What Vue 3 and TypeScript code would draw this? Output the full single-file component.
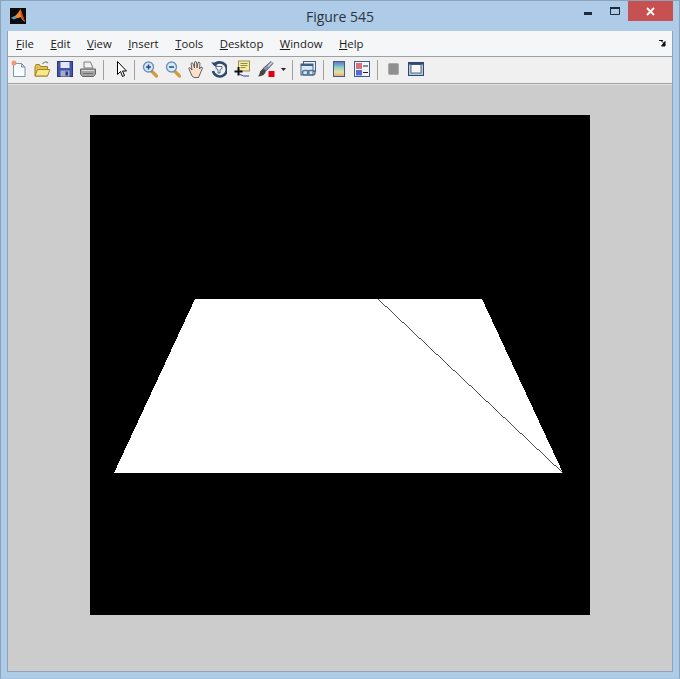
<script setup lang="ts">
const menus = [
  { key: 'F', rest: 'ile' },
  { key: 'E', rest: 'dit' },
  { key: 'V', rest: 'iew' },
  { key: 'I', rest: 'nsert' },
  { key: 'T', rest: 'ools' },
  { key: 'D', rest: 'esktop' },
  { key: 'W', rest: 'indow' },
  { key: 'H', rest: 'elp' },
];
</script>

<template>
  <div class="window">
    <header class="titlebar">
      <div class="title-left">
        <svg class="logo" width="16" height="16" viewBox="0 0 16 16">
          <rect width="16" height="16" fill="#0b0b0b" />
          <path d="M1 10l4-2 3-3 2.500-4 4.500 13-2.500-2-2-3-2 1z" fill="#f0892a" />
          <path d="M10.500 1l4.500 13-3-3-1.500-5z" fill="#c9441a" />
          <path d="M1 10l4-2 2 2-3 1.500z" fill="#4fa3c0" />
        </svg>
      </div>
      <div class="title">Figure 545</div>
      <div class="title-right">
        <svg class="win-icon" width="8" height="3" viewBox="0 0 8 3"><rect width="8" height="3" fill="#1d2a3a" /></svg>
        <svg class="win-icon max" width="10" height="8" viewBox="0 0 10 8">
          <path d="M.5.500h9v7h-9z" fill="none" stroke="#1d2a3a" />
          <rect width="10" height="2" fill="#1d2a3a" />
        </svg>
        <div class="close">
          <svg width="9" height="9" viewBox="0 0 9 9"><path d="M1 1l7 7M8 1L1 8" stroke="#fff" stroke-width="1.800" /></svg>
        </div>
      </div>
    </header>

    <div class="client">
      <nav class="menubar">
        <span v-for="m in menus" :key="m.key" class="menu"><u>{{ m.key }}</u>{{ m.rest }}</span>
        <svg class="dock" width="8" height="7" viewBox="0 0 8 7">
          <path d="M0 .500h4M2 .500l4 4M6 1.500v4.500H2.500z" stroke="#111" fill="#111" />
        </svg>
      </nav>

      <div class="toolbar">
        <!-- new figure -->
        <svg class="tool" width="16" height="18" viewBox="0 0 16 18">
          <path d="M2.500 3.500h8l3.500 3.500v9.500H2.500z" fill="#f8fbff" stroke="#7f93ab" />
          <path d="M10.500 3.500V7H14z" fill="#cfdcea" stroke="#7f93ab" />
          <circle cx="3" cy="3" r="2.500" fill="#ee9a78" />
        </svg>
        <!-- open -->
        <svg class="tool" width="16" height="18" viewBox="0 0 16 18">
          <path d="M1 7v9h12.500V6.500h-7l-1-2H2z" fill="#e6c24a" stroke="#9c8430" />
          <path d="M1 16l2.500-6.500H16L13.500 16z" fill="#f9e88a" stroke="#9c8430" />
          <path d="M8.500 4q2.500-3.500 5.500-1" fill="none" stroke="#6f8f76" stroke-width="1.200" />
        </svg>
        <!-- save -->
        <svg class="tool" width="16" height="18" viewBox="0 0 16 18">
          <rect x=".5" y="1.500" width="15" height="15" fill="#4453ae" stroke="#2b3580" />
          <rect x="3.500" y="2" width="9" height="6" fill="#e4e8f4" />
          <rect x="3.500" y="10.500" width="9" height="6" fill="#a5adc2" />
          <rect x="8.500" y="11.500" width="2.500" height="4" fill="#2b3580" />
        </svg>
        <!-- print -->
        <svg class="tool" width="16" height="18" viewBox="0 0 16 18">
          <path d="M4 8V2h6.500L13 8z" fill="#f0f0f0" stroke="#7d7d7d" />
          <path d="M.5 9h15v5l-2 2.500h-11l-2-2.500z" fill="#a3a3a3" stroke="#666" />
          <path d="M2 10.500h12" stroke="#dcdcdc" />
          <path d="M3 13.500h10" stroke="#6e6e6e" />
        </svg>
        <i class="sep s1"></i>
        <!-- pointer -->
        <svg class="tool" width="11" height="18" viewBox="0 0 11 18">
          <path d="M1.500 1.500v13l3-3 2 5 2-1-2-4.500h4z" fill="#fff" stroke="#000" />
        </svg>
        <i class="sep s2"></i>
        <!-- zoom in -->
        <svg class="tool" width="16" height="18" viewBox="0 0 16 18">
          <path d="M9.500 11l5 5" stroke="#d49a3c" stroke-width="3.200" stroke-linecap="round" />
          <circle cx="6.500" cy="7" r="5" fill="#d6e8fa" stroke="#6f93b5" stroke-width="1.400" />
          <path d="M4 7h5M6.500 4.500v5" stroke="#1f4a86" stroke-width="1.500" />
        </svg>
        <!-- zoom out -->
        <svg class="tool" width="16" height="18" viewBox="0 0 16 18">
          <path d="M9.500 11l5 5" stroke="#d49a3c" stroke-width="3.200" stroke-linecap="round" />
          <circle cx="6.500" cy="7" r="5" fill="#d6e8fa" stroke="#6f93b5" stroke-width="1.400" />
          <path d="M4 7h5" stroke="#1f4a86" stroke-width="1.500" />
        </svg>
        <!-- pan -->
        <svg class="tool" width="16" height="18" viewBox="0 0 16 18">
          <path d="M4 16L.800 8.500q0-1.500 1.500-.5L4 10 3 3.500q1-1.500 2 0L6.500 8 6.500 2q1.500-1.200 2 0l.5 6 1-5.500q1.500-.8 2 .5l-.5 6 1.500-2q1.500 0 1.500 1l-2.500 6-1.500 3.500H6z" fill="#fbe0cc" stroke="#555" stroke-width=".9" />
        </svg>
        <!-- rotate 3d -->
        <svg class="tool" width="16" height="18" viewBox="0 0 16 18">
          <path d="M3 5.500A7 7 0 1 1 2 11" fill="none" stroke="#2f4a70" stroke-width="2.600" />
          <path d="M0 2.500h5.500v5z" fill="#2f4a70" />
          <path d="M5 6.500h6v2l-2 1v3.500H7V9.500l-2-1z" fill="#fff" stroke="#2f4a70" stroke-width=".8" />
        </svg>
        <!-- data cursor -->
        <svg class="tool" width="16" height="18" viewBox="0 0 16 18">
          <rect x="4.500" y="1" width="11" height="10" fill="#f4eca4" stroke="#9a9050" />
          <path d="M6.500 3.500h7M6.500 5.500h7M6.500 7.500h5" stroke="#8f8a50" />
          <path d="M4.500 7v8.500M.5 11.500h8" stroke="#111" stroke-width="2" />
          <path d="M5 14q4 3 10 2" fill="none" stroke="#2a3fa0" />
        </svg>
        <!-- brush -->
        <svg class="tool" width="18" height="18" viewBox="0 0 18 18">
          <path d="M14 1.500l2 2-7 7.500-3-2.500z" fill="#8694aa" stroke="#48536a" stroke-width=".8" />
          <path d="M6 8.500l3 2.500q-1 5-8 5.500 2-2 2-5z" fill="#444" />
          <path d="M15 2.500l-4 4" stroke="#d3d8e2" stroke-width="1.200" />
          <rect x="11.500" y="11" width="6" height="6" fill="#e00018" />
        </svg>
        <svg class="tool caret" width="5" height="3" viewBox="0 0 5 3"><path d="M0 0h5L2.500 3z" fill="#222" /></svg>
        <i class="sep s3"></i>
        <!-- link -->
        <svg class="tool" width="16" height="18" viewBox="0 0 16 18">
          <rect x="3.500" y="1.500" width="12" height="10" fill="#eef3f8" stroke="#3d5f85" />
          <rect x="1" y="4" width="12" height="11" fill="#dde7f2" stroke="#3d5f85" />
          <path d="M1 4h12v2H1z" fill="#3d5f85" />
          <rect x="2.500" y="10.500" width="6.500" height="4.500" rx="2.200" fill="none" stroke="#56789a" stroke-width="1.500" />
          <rect x="7.500" y="10.500" width="7.500" height="4.500" rx="2.200" fill="none" stroke="#56789a" stroke-width="1.500" />
        </svg>
        <i class="sep s4"></i>
        <!-- colorbar -->
        <svg class="tool cbar" width="12" height="18" viewBox="0 0 12 18">
          <defs>
            <linearGradient id="cbar" x1="0" y1="0" x2="0" y2="1">
              <stop offset="0" stop-color="#5a70c8" />
              <stop offset=".4" stop-color="#8fd0c8" />
              <stop offset=".7" stop-color="#e8e0a0" />
              <stop offset="1" stop-color="#e8a878" />
            </linearGradient>
          </defs>
          <rect x=".5" y="1.500" width="11" height="15" fill="url(#cbar)" stroke="#3d5f85" />
        </svg>
        <!-- legend -->
        <svg class="tool" width="16" height="18" viewBox="0 0 16 18">
          <rect x=".5" y="1.500" width="15" height="15" fill="#f4f6fa" stroke="#3d5f85" />
          <rect x="2" y="3" width="6" height="6" fill="#d8707a" />
          <rect x="2" y="10" width="6" height="5.500" fill="#5a6ad0" />
          <path d="M9 6h5M9 12.500h5" stroke="#222" stroke-width="1.200" />
        </svg>
        <i class="sep s5"></i>
        <!-- hide plot tools -->
        <svg class="tool hide" width="11" height="18" viewBox="0 0 11 18">
          <rect x=".5" y="3.500" width="10" height="11" rx="1" fill="#8f8f8f" stroke="#aaa" />
        </svg>
        <!-- show plot tools -->
        <svg class="tool" width="16" height="18" viewBox="0 0 16 18">
          <rect x=".5" y="2.500" width="15" height="13" fill="#b9c6dc" stroke="#2f4a70" />
          <rect x="3" y="4.500" width="10" height="8.500" fill="#f6f6f2" stroke="#2f4a70" stroke-width=".8" />
          <rect x="1" y="2.500" width="14" height="2" fill="#2f4a70" />
        </svg>
      </div>

      <main class="figure">
        <svg class="axes" width="500" height="500" viewBox="0 0 500 500" shape-rendering="crispEdges">
          <rect width="500" height="500" fill="#000" />
          <path d="M105 184H392L473 358H24Z" fill="#fff" />
          <path d="M288 184L473 358" stroke="#000" stroke-width=".7" fill="none" />
        </svg>
      </main>
    </div>
  </div>
</template>

<style scoped>
.window {
  box-sizing: border-box;
  width: 680px;
  height: 679px;
  display: flex;
  flex-direction: column;
  background: #aecbe8;
  border: 1px solid #8aa2bc;
  border-bottom-color: #a6c4e2;
  padding: 0 6px 6px;
  font-family: "Open Sans", "Noto Sans", sans-serif;
  color: #000;
}

.titlebar {
  height: 30px;
  flex: none;
  display: grid;
  grid-template-columns: 1fr auto 1fr;
}

.title-left {
  padding: 7px 0 0 3px;
}

.logo {
  display: block;
}

.title {
  font-size: 14px;
  line-height: 20px;
  padding-top: 6px;
  color: #2b3640;
}

.title-right {
  display: flex;
  justify-content: flex-end;
  align-items: flex-start;
}

.win-icon {
  margin-top: 11px;
  margin-right: 18px;
}

.win-icon.max {
  margin-top: 6px;
  margin-right: 8px;
}

.close {
  width: 45px;
  height: 20px;
  background: #c75050;
  display: flex;
  align-items: center;
  justify-content: center;
}

.client {
  flex: 1;
  display: flex;
  flex-direction: column;
  border: 1px solid #8fa4bc;
  border-top: none;
  background: #ccc;
}

.menubar {
  height: 25px;
  flex: none;
  display: flex;
  align-items: center;
  padding-left: 8px;
  background: #f5f6f8;
  border-bottom: 1px solid #a0a0a0;
  font-size: 11.300px;
  color: #1a1a1a;
}

.menu {
  margin-right: 16.500px;
}

.dock {
  margin-left: auto;
  margin-right: 5px;
}

.toolbar {
  height: 26px;
  flex: none;
  display: flex;
  align-items: center;
  padding-left: 3px;
  background: #f0f0f0;
  border-bottom: 1px solid #a0a0a0;
}

.tool {
  flex: none;
  margin-right: 7px;
  margin-bottom: 2px;
}

.caret {
  margin-left: -1px;
  margin-right: 6px;
}

.cbar,
.hide {
  margin-right: 9px;
}

.sep {
  flex: none;
  width: 1px;
  height: 20px;
  background: #a0a0a0;
}

.s1 { margin-right: 12px; }
.s2 { margin-right: 7px; }
.s3 { margin-right: 7px; }
.s4 { margin-right: 9px; }
.s5 { margin-right: 10px; }

.figure {
  flex: 1;
  display: flex;
  justify-content: center;
  align-items: flex-start;
  padding-top: 31px;
  box-shadow: inset 0 1px 0 #e4e4e4;
}

.axes {
  display: block;
}
</style>

<style>
html, body {
  margin: 0;
  overflow: hidden;
}
</style>
